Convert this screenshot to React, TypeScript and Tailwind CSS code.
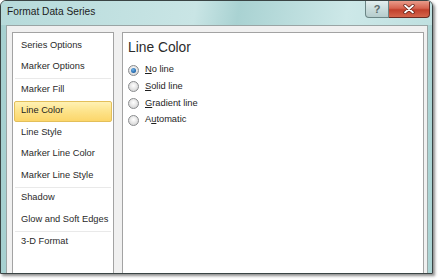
import React from 'react';

const GROUPS = [
  ['Series Options', 'Marker Options'],
  ['Marker Fill', 'Line Color', 'Line Style', 'Marker Line Color', 'Marker Line Style'],
  ['Shadow', 'Glow and Soft Edges'],
  ['3-D Format'],
];

const OPTIONS = [
  { key: 'N', rest: 'o line', checked: true },
  { key: 'S', rest: 'olid line', checked: false },
  { key: 'G', rest: 'radient line', checked: false },
  { pre: 'A', key: 'u', rest: 'tomatic', checked: false },
];

function Radio({ checked }: { checked: boolean }) {
  return (
    <span className="w-[11px] h-[11px] rounded-full border border-[#8a8c8e] bg-[radial-gradient(circle_at_50%_40%,#ffffff_0%,#e3e3e3_55%,#c9cacb_100%)] flex items-center justify-center shrink-0">
      {checked && (
        <span className="w-[5px] h-[5px] rounded-full bg-[radial-gradient(circle_at_40%_35%,#6fb2e8_0%,#1f64a8_70%,#134a80_100%)]" />
      )}
    </span>
  );
}

export default function App() {
  const selected = 'Line Color';

  return (
    <div className="w-[438px] h-[279px] bg-white overflow-hidden" style={{ fontFamily: '"Liberation Sans", Arial, sans-serif' }}>
      <div className="w-[433px] h-[274px] border border-[#3a4444] rounded-t-[6px] overflow-hidden flex flex-col bg-[linear-gradient(90deg,#a6d0d0_0%,#b9dddd_40%,#cde8e8_60%,#acd4d4_100%)] shadow-[2px_2px_3px_rgba(0,0,0,0.45)]">
        {/* title bar */}
        <div className="h-[24px] shrink-0 flex items-start bg-[linear-gradient(100deg,#b6dada_0%,#c9e5e5_45%,#a9d2d2_55%,#cde8e8_80%,#bfe0e0_100%)]">
          <span className="pl-[6px] pt-[6px] text-[10.2px] leading-none text-[#1c1c1c]">Format Data Series</span>
          <div className="ml-auto mr-[2px] flex">
            <div className="w-[24px] h-[17px] border border-[#6b8585] border-t-0 rounded-bl-[4px] bg-[linear-gradient(180deg,#e3eeee_0%,#c9dcdc_50%,#b5cccc_100%)] flex items-center justify-center text-[11px] font-bold text-[#5a6a6a] leading-none">
              ?
            </div>
            <div className="w-[41px] h-[17px] border border-[#6a2b22] border-t-0 border-l-0 rounded-br-[4px] bg-[linear-gradient(180deg,#e99b8a_0%,#d66450_45%,#c1402c_55%,#d4654c_100%)] flex items-center justify-center">
              <svg width="12" height="10" viewBox="0 0 12 10">
                <path d="M2 1.5 L10 8.5 M10 1.5 L2 8.5" stroke="#5a1a10" strokeWidth="3.2" strokeLinecap="round" />
                <path d="M2 1.5 L10 8.5 M10 1.5 L2 8.5" stroke="#ffffff" strokeWidth="1.8" strokeLinecap="round" />
              </svg>
            </div>
          </div>
        </div>

        {/* body */}
        <div className="flex-1 ml-[5px] mr-[4px] border-t border-x border-[#9aa5a5] bg-[#f0f0f0] flex gap-[8px] pl-[5px] pr-[3px] pt-[6px] min-h-0">
          <div className="w-[102px] shrink-0 bg-white border-t border-x border-[#a3a3a3] pt-[2px] px-[1px]">
            {GROUPS.map((group, gi) => (
              <div key={gi}>
                {gi > 0 && <div className="h-px mx-[1px] bg-[#e9e9e9]" />}
                {group.map((label) => (
                  <div
                    key={label}
                    className={
                      label === selected
                        ? 'h-[21.5px] flex items-center pl-[6px] text-[9.3px] text-[#1e1e1e] rounded-[2px] border border-[#e3bf5a] bg-[linear-gradient(180deg,#fff1b4_0%,#fde48d_45%,#fcd66a_100%)]'
                        : 'h-[21.5px] flex items-center pl-[7px] text-[9.3px] text-[#2a2a2a]'
                    }
                  >
                    {label}
                  </div>
                ))}
              </div>
            ))}
          </div>

          <div className="w-[302px] shrink-0 bg-white border-t border-x border-[#a3a3a3] pl-[5px] pt-[8px]">
            <div className="text-[13.8px] leading-none text-[#2b2b2b]">Line Color</div>
            <div className="mt-[7px] flex flex-col">
              {OPTIONS.map((o) => (
                <div key={o.rest} className="h-[16.7px] flex items-center gap-[6px]">
                  <Radio checked={o.checked} />
                  <span className="text-[9.3px] text-[#1e1e1e]">
                    {o.pre}
                    <span className="underline underline-offset-[1px]">{o.key}</span>
                    {o.rest}
                  </span>
                </div>
              ))}
            </div>
          </div>
        </div>
      </div>
    </div>
  );
}
